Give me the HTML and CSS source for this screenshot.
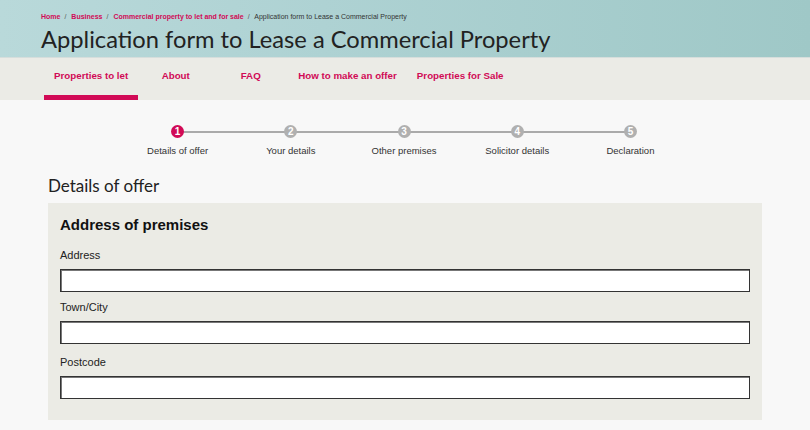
FILE: index.html
```html
<!DOCTYPE html>
<html lang="en">
<head>
<meta charset="utf-8">
<title>Application form to Lease a Commercial Property</title>
<link rel="stylesheet" href="styles.css">
</head>
<body>
<header class="masthead">
  <div class="masthead-inner">
    <nav class="breadcrumb">
      <a class="crumb" href="#">Home</a><span class="sep">/</span>
      <a class="crumb" href="#">Business</a><span class="sep">/</span>
      <a class="crumb" href="#">Commercial property to let and for sale</a><span class="sep">/</span>
      <span class="crumb-current">Application form to Lease a Commercial Property</span>
    </nav>
    <h1 class="page-title">Application form to Lease a Commercial Property</h1>
  </div>
</header>
<nav class="section-nav">
  <ul class="tabs">
    <li class="tab tab-active"><a href="#">Properties to let</a></li>
    <li class="tab"><a href="#">About</a></li>
    <li class="tab"><a href="#">FAQ</a></li>
    <li class="tab"><a href="#">How to make an offer</a></li>
    <li class="tab"><a href="#">Properties for Sale</a></li>
  </ul>
</nav>
<main class="content">
  <ol class="stepper">
    <li class="step step-current"><span class="step-dot">1</span><span class="step-label">Details of offer</span></li>
    <li class="step"><span class="step-dot">2</span><span class="step-label">Your details</span></li>
    <li class="step"><span class="step-dot">3</span><span class="step-label">Other premises</span></li>
    <li class="step"><span class="step-dot">4</span><span class="step-label">Solicitor details</span></li>
    <li class="step"><span class="step-dot">5</span><span class="step-label">Declaration</span></li>
  </ol>
  <h2 class="section-title">Details of offer</h2>
  <form class="panel">
    <h3 class="panel-title">Address of premises</h3>
    <div class="field">
      <label class="field-label" for="address">Address</label>
      <input class="field-input" id="address" type="text">
    </div>
    <div class="field">
      <label class="field-label" for="town">Town/City</label>
      <input class="field-input" id="town" type="text">
    </div>
    <div class="field field-spaced">
      <label class="field-label" for="postcode">Postcode</label>
      <input class="field-input" id="postcode" type="text">
    </div>
  </form>
</main>
</body>
</html>
```
FILE: styles.css
```css
* { box-sizing: border-box; }
html, body { margin: 0; padding: 0; }
body {
  background: #f8f8f8;
  font-family: "Liberation Sans", Arial, sans-serif;
  color: #222;
  width: 810px;
  height: 430px;
  overflow: hidden;
}
a { text-decoration: none; color: inherit; }

.masthead {
  height: 58px;
  background: linear-gradient(90deg, #b9d9da 0%, #aed2d3 40%, #9fc8c7 100%);
  border-bottom: 1px solid #d6dedc;
}
.masthead-inner {
  padding: 12px 0 0 41px;
}
.breadcrumb {
  font-size: 7px;
  line-height: 10px;
  white-space: nowrap;
}
.crumb { color: #d10a56; font-weight: bold; }
.sep { color: #555; margin: 0 3px 0 4px; }
.crumb-current { color: #333; }
.page-title {
  margin: 3px 0 0;
  font-family: Lato, "Open Sans", sans-serif;
  font-weight: 400;
  font-size: 23.7px;
  line-height: 28px;
  color: #222;
  white-space: nowrap;
}

.section-nav {
  background: #ebebe6;
  height: 42px;
}
.tabs {
  list-style: none;
  margin: 0;
  padding: 0 0 0 44px;
  display: flex;
  height: 100%;
}
.tab {
  min-width: 75px;
  padding: 12px 10px 0;
  text-align: center;
  font-size: 9.75px;
  font-weight: bold;
  color: #d10a56;
  display: flex;
  justify-content: center;
  border-bottom: 5px solid transparent;
}
.tab-active { border-bottom-color: #d10a56; }

.content {
  padding: 0 48px;
}
.stepper {
  list-style: none;
  margin: 0 0 0 73px;
  padding: 25px 0 0;
  display: flex;
  width: 566px;
}
.step {
  flex: 1;
  position: relative;
  display: flex;
  flex-direction: column;
  align-items: center;
}
.step::after {
  content: "";
  position: absolute;
  top: 5.5px;
  left: 50%;
  width: 100%;
  height: 2px;
  background: #aaa;
}
.step:last-child::after { display: none; }
.step-dot {
  position: relative;
  z-index: 1;
  width: 13px;
  height: 13px;
  border-radius: 50%;
  background: #b0b0b0;
  color: #fff;
  font-size: 10px;
  font-weight: bold;
  line-height: 13px;
  text-align: center;
}
.step-current .step-dot { background: #d10a56; }
.step-label {
  margin-top: 7px;
  font-size: 9.5px;
  line-height: 12px;
  color: #333;
  white-space: nowrap;
}

.section-title {
  margin: 18px 0 0;
  font-family: Lato, "Open Sans", sans-serif;
  font-weight: 400;
  font-size: 17px;
  line-height: 22px;
  color: #222;
}
.panel {
  margin-top: 6px;
  width: 714px;
  background: #ebebe5;
  padding: 13px 12px 21px;
}
.panel-title {
  margin: 0 0 14px;
  font-size: 15px;
  font-weight: bold;
  line-height: 18px;
  color: #111;
}
.field { display: flex; flex-direction: column; }
.field + .field { margin-top: 8px; }
.field.field-spaced { margin-top: 11px; }
.field-label {
  font-size: 11px;
  line-height: 14px;
  color: #222;
  margin-bottom: 7px;
}
.field-input {
  width: 690px;
  height: 23px;
  border: 1px solid #333;
  box-shadow: inset 1px 1px 0 #777;
  background: #fff;
  margin: 0;
  padding: 0 4px;
  font: inherit;
}
```
